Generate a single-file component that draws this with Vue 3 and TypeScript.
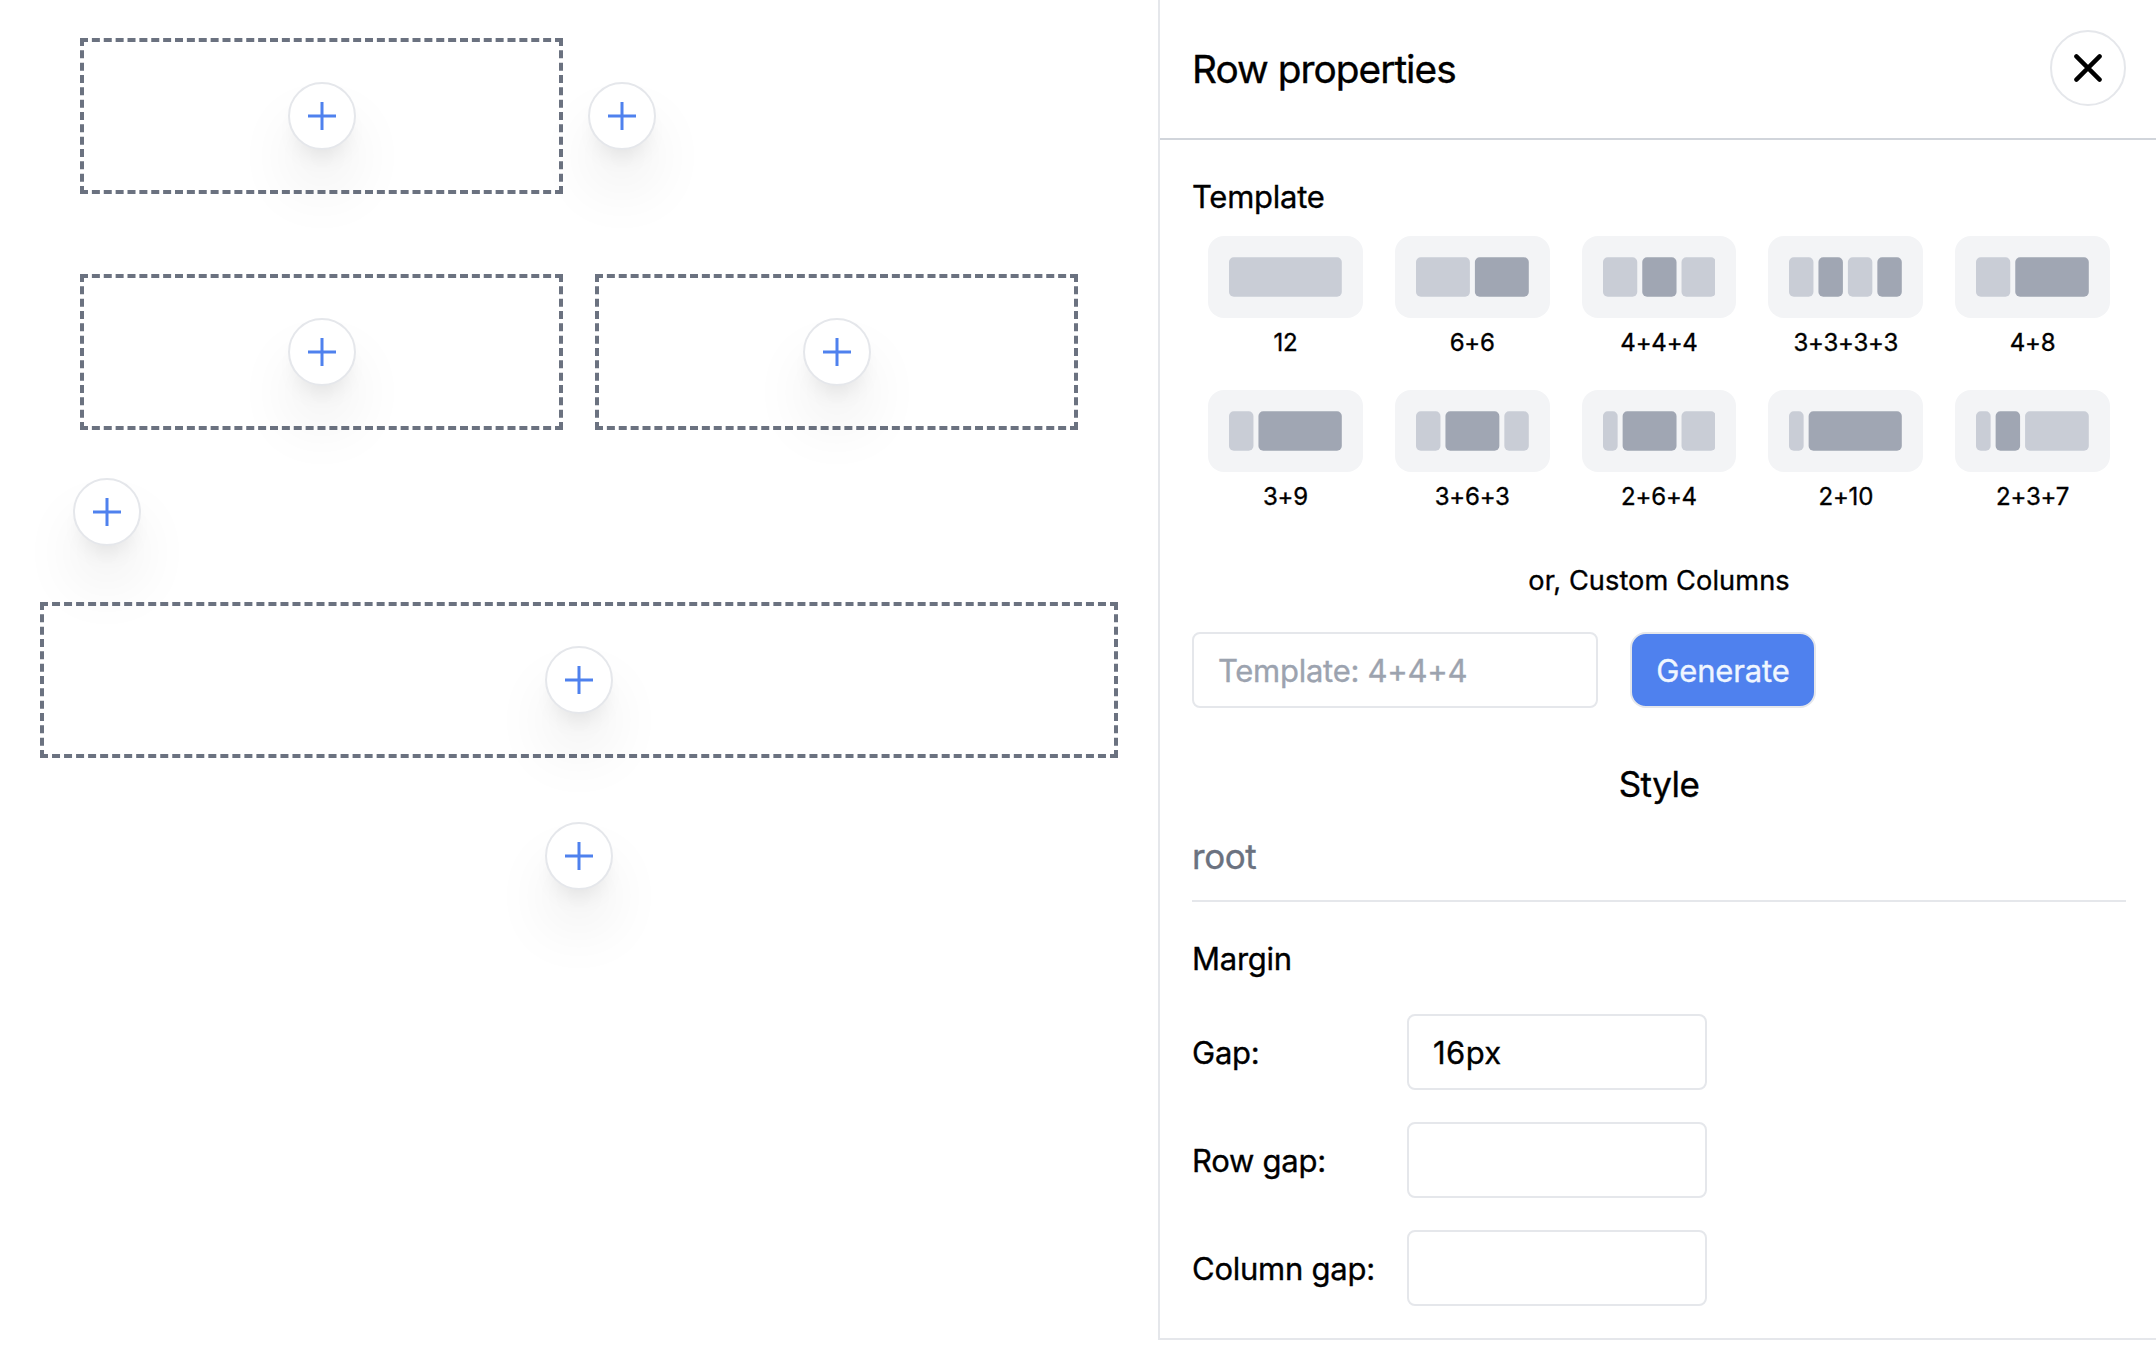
<script setup lang="ts">
import { ref } from 'vue'

interface Bar { x: number; width: number; dark: boolean }
interface Template { label: string; bars: Bar[] }

const TRACK = 112.8
const GAP = 5
const UNIT = (TRACK - 11 * GAP) / 12

function toTemplate(label: string): Template {
  let x = 0
  const bars = label.split('+').map(Number).map((span, i) => {
    const width = span * UNIT + (span - 1) * GAP
    const bar = { x, width, dark: i % 2 === 1 }
    x += width + GAP
    return bar
  })
  return { label, bars }
}

const templates: Template[] = [
  '12', '6+6', '4+4+4', '3+3+3+3', '4+8',
  '3+9', '3+6+3', '2+6+4', '2+10', '2+3+7',
].map(toTemplate)

const custom = ref('')
const fields = ref([
  { label: 'Gap:', value: '16px' },
  { label: 'Row gap:', value: '' },
  { label: 'Column gap:', value: '' },
])
</script>

<template>
  <div class="editor">
    <main class="canvas">
      <div class="row inset">
        <div class="cell">
          <button class="add"><svg class="plus" viewBox="0 0 28 28"><path d="M14 0v28M0 14h28" /></svg></button>
        </div>
        <div class="slot">
          <button class="add"><svg class="plus" viewBox="0 0 28 28"><path d="M14 0v28M0 14h28" /></svg></button>
        </div>
      </div>
      <div class="row inset second">
        <div v-for="n in 2" :key="n" class="cell">
          <button class="add"><svg class="plus" viewBox="0 0 28 28"><path d="M14 0v28M0 14h28" /></svg></button>
        </div>
      </div>
      <div class="append">
        <button class="add"><svg class="plus" viewBox="0 0 28 28"><path d="M14 0v28M0 14h28" /></svg></button>
      </div>
      <div class="row outer">
        <div class="cell">
          <button class="add"><svg class="plus" viewBox="0 0 28 28"><path d="M14 0v28M0 14h28" /></svg></button>
        </div>
      </div>
      <div class="last">
        <button class="add"><svg class="plus" viewBox="0 0 28 28"><path d="M14 0v28M0 14h28" /></svg></button>
      </div>
    </main>

    <aside class="panel">
      <header class="head">
        <h1>Row properties</h1>
        <button class="close" aria-label="Close">
          <svg viewBox="0 0 28 28"><path d="M2.4 2.4l23.2 23.2M25.6 2.4L2.4 25.6" /></svg>
        </button>
      </header>

      <section class="body">
        <h2 class="template-title">Template</h2>
        <div class="templates">
          <div v-for="t in templates" :key="t.label" class="template">
            <div class="card">
              <svg class="bars" :viewBox="`0 0 ${TRACK} 40`">
                <rect
                  v-for="(b, i) in t.bars" :key="i" :class="{ dark: b.dark }"
                  :x="b.x" y="0.3" :width="b.width" height="39.4" rx="4.8"
                />
              </svg>
            </div>
            <span class="label">{{ t.label }}</span>
          </div>
        </div>
        <p class="or">or, Custom Columns</p>
        <div class="custom">
          <input v-model="custom" class="custom-input" placeholder="Template: 4+4+4">
          <button class="generate">Generate</button>
        </div>

        <h2 class="style-title">Style</h2>
        <div class="root">root</div>
        <h3 class="margin">Margin</h3>
        <div class="fields">
          <label v-for="f in fields" :key="f.label" class="field">
            <span class="name">{{ f.label }}</span>
            <input v-model="f.value">
          </label>
        </div>
      </section>
    </aside>
  </div>
</template>

<style>
body {
  margin: 0;
  background: #fff;
}
</style>

<style scoped>
* {
  box-sizing: border-box;
}
.editor {
  display: flex;
  align-items: flex-start;
  width: 2156px;
  height: 1358px;
  overflow: hidden;
  color: #000;
  font: 400 31px/48px Inter, "Liberation Sans", sans-serif;
  -webkit-text-stroke: .35px currentColor;
}
h1, h2, h3, p {
  margin: 0;
  font-weight: 400;
}
button, input {
  margin: 0;
  font: inherit;
  outline: none;
}
.canvas {
  width: 1158px;
  padding: 38px 40px 0;
}
.row {
  display: grid;
  grid-template-columns: 1fr 1fr;
  gap: 32px;
}
.inset {
  padding: 0 40px;
}
.second {
  margin-top: 80px;
}
.outer {
  grid-template-columns: 1fr;
  margin-top: 56px;
}
.cell {
  display: flex;
  align-items: center;
  justify-content: center;
  height: 156px;
  border: 4px dashed #6b7280;
}
.slot {
  padding-top: 44px;
  margin-left: -7px;
}
.append {
  margin: 48px 0 0 33px;
}
.last {
  display: flex;
  justify-content: center;
  margin-top: 64px;
}
.add {
  display: flex;
  align-items: center;
  justify-content: center;
  width: 68px;
  height: 68px;
  padding: 0;
  border: 2px solid #e5e7eb;
  border-radius: 50%;
  background: #fff;
  box-shadow: 0 40px 64px -4px rgba(0, 0, 0, .09), 0 16px 22px -11px rgba(0, 0, 0, .1);
}
.plus {
  display: block;
  width: 28px;
  height: 28px;
  fill: none;
  stroke: #4f81ee;
  stroke-width: 3;
}
.panel {
  width: 998px;
  height: 1340px;
  border-left: 2px solid #e5e7eb;
  border-bottom: 2px solid #e5e7eb;
}
.head {
  display: flex;
  align-items: center;
  justify-content: space-between;
  height: 140px;
  padding: 0 30px 2px 32px;
  border-bottom: 2px solid #d1d5db;
}
h1 {
  padding-top: 1px;
  font-size: 38.8px;
  letter-spacing: -.98px;
}
.close {
  display: flex;
  align-items: center;
  justify-content: center;
  width: 76px;
  height: 76px;
  padding: 0;
  border: 2px solid #e5e7eb;
  border-radius: 50%;
  background: #fff;
}
.close svg {
  width: 28px;
  height: 28px;
  fill: none;
  stroke: #000;
  stroke-width: 4.4;
  stroke-linecap: round;
}
.body {
  padding: 32px 30px 0 32px;
}
.template-title {
  height: 48px;
  line-height: 50px;
  font-size: 31px;
  letter-spacing: -.25px;
}
.templates {
  display: grid;
  grid-template-columns: repeat(5, 1fr);
  gap: 32px;
  padding: 16px 16px 0;
}
.template {
  display: flex;
  flex-direction: column;
}
.card {
  height: 82px;
  padding: 21px;
  border-radius: 16px;
  background: #f3f4f6;
}
.bars {
  display: block;
  width: 112.8px;
  height: 40px;
  fill: #c9cdd6;
}
.bars .dark {
  fill: #a0a6b3;
}
.label {
  height: 32px;
  margin-top: 8px;
  font-size: 24px;
  line-height: 34px;
  letter-spacing: -.2px;
  text-align: center;
}
.or {
  height: 40px;
  margin-top: 48px;
  font-size: 27.2px;
  line-height: 42px;
  letter-spacing: .08px;
  text-align: center;
}
.custom {
  display: flex;
  gap: 32px;
  margin-top: 32px;
}
input {
  width: 300px;
  height: 76px;
  padding: 0 24px;
  border: 2px solid #e5e7eb;
  border-radius: 8px;
  background: #fff;
  color: #000;
  letter-spacing: .4px;
}
.custom-input {
  width: 406px;
  letter-spacing: -.27px;
}
input::placeholder {
  color: #9ca3af;
  opacity: 1;
}
.generate {
  width: 186px;
  height: 76px;
  padding: 1px 0 0;
  border: 2px solid #e5e7eb;
  border-radius: 16px;
  background: #4f81ee;
  color: #eff6ff;
  letter-spacing: -.15px;
}
.style-title {
  margin-top: 48px;
  font-size: 35px;
  line-height: 56px;
  letter-spacing: -.55px;
  text-align: center;
}
.root {
  height: 74px;
  margin-top: 16px;
  border-bottom: 2px solid #e5e7eb;
  color: #6b7280;
  font-size: 35px;
  line-height: 56px;
  letter-spacing: -.4px;
}
.margin {
  height: 48px;
  margin-top: 32px;
  font-size: 31px;
  line-height: 50px;
  letter-spacing: -.25px;
}
.fields {
  display: flex;
  flex-direction: column;
  gap: 32px;
  margin-top: 32px;
}
.field {
  display: grid;
  grid-template-columns: 183px 300px;
  column-gap: 32px;
  align-items: center;
}
.name {
  height: 48px;
  line-height: 50px;
  letter-spacing: -.25px;
  white-space: nowrap;
}
</style>
